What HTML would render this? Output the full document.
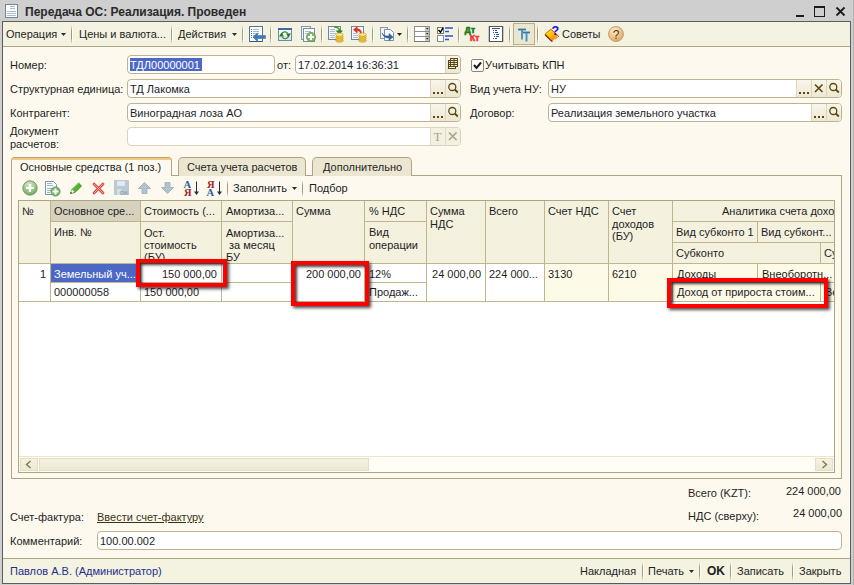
<!DOCTYPE html>
<html><head><meta charset="utf-8"><style>
html,body{margin:0;padding:0;width:854px;height:585px;overflow:hidden;background:#cfcfcf}
div{position:absolute}
svg{position:absolute;overflow:visible}
.t{white-space:pre;font-family:'Liberation Sans', sans-serif;font-size:11px;line-height:13px;color:#1e1e1e}
</style></head><body>
<div style="left:0px;top:0px;width:854px;height:585px;background:#cfcfcf"></div><svg style="position:absolute;left:5px;top:4px" width="13" height="14" viewBox="0 0 13 14"><rect x="0.5" y="0.5" width="12" height="13" fill="#fff" stroke="#6f8596"/><path d="M5 2.5h5M5 4.5h5M2 7.5h9M2 9.5h9M2 11.5h9" stroke="#a9bccb" stroke-width="1"/></svg><div class="t" style="left:25px;top:6px;font-weight:bold;font-size:12px;color:#2a2a2a">Передача ОС: Реализация. Проведен</div><div style="left:796px;top:15px;width:8px;height:2px;background:#1b1b1b"></div><div style="left:814px;top:6px;width:11px;height:11px;box-sizing:border-box;border:1px solid #1b1b1b;border-top-width:2px"></div><svg style="position:absolute;left:835px;top:6px" width="11" height="11" viewBox="0 0 11 11"><path d="M1.5 1.5L9.5 9.5M9.5 1.5L1.5 9.5" stroke="#1b1b1b" stroke-width="1.8"/></svg><div style="left:853px;top:0px;width:1px;height:585px;background:#b0b0b0"></div><div style="left:2px;top:21px;width:849px;height:563px;box-sizing:border-box;border:1px solid #5c5c5c;background:#fdf9ee"></div><div style="left:3px;top:22px;width:847px;height:24px;background:#f4f2e1"></div><div style="left:3px;top:46px;width:847px;height:1px;background:#aea682"></div><div class="t" style="left:6px;top:28px;">Операция</div><svg style="position:absolute;left:61px;top:33px" width="5" height="3" viewBox="0 0 5 3"><path d="M0 0h5L2.5 3z" fill="#2b2b2b"/></svg><div style="left:71px;top:25px;width:1px;height:19px;background:linear-gradient(#f4f2e1,#a39a77 30%,#a39a77 70%,#f4f2e1)"></div><div style="left:72px;top:25px;width:1px;height:19px;background:linear-gradient(#f4f2e1,#ffffff 30%,#ffffff 70%,#f4f2e1)"></div><div class="t" style="left:79px;top:28px;">Цены и валюта...</div><div style="left:171px;top:25px;width:1px;height:19px;background:linear-gradient(#f4f2e1,#a39a77 30%,#a39a77 70%,#f4f2e1)"></div><div style="left:172px;top:25px;width:1px;height:19px;background:linear-gradient(#f4f2e1,#ffffff 30%,#ffffff 70%,#f4f2e1)"></div><div class="t" style="left:178px;top:28px;">Действия</div><svg style="position:absolute;left:232px;top:33px" width="5" height="3" viewBox="0 0 5 3"><path d="M0 0h5L2.5 3z" fill="#2b2b2b"/></svg><div style="left:242px;top:25px;width:1px;height:19px;background:linear-gradient(#f4f2e1,#a39a77 30%,#a39a77 70%,#f4f2e1)"></div><div style="left:243px;top:25px;width:1px;height:19px;background:linear-gradient(#f4f2e1,#ffffff 30%,#ffffff 70%,#f4f2e1)"></div><svg style="position:absolute;left:249px;top:26px" width="17" height="17" viewBox="0 0 17 17"><rect x="0.5" y="0.5" width="13" height="15" fill="#fbfdff" stroke="#58748f"/><path d="M0.5 15.5h13" stroke="#3d566e"/><path d="M2 3.5h1M2 5.5h1M2 7.5h1M2 9.5h1M2 11.5h1" stroke="#3f78b0"/><path d="M4 3.5h6M4 5.5h6M4 7.5h6M4 9.5h3M4 11.5h3" stroke="#aab6c2"/><path d="M16.5 9.5H8.5V7L4 11l4.5 4.5v-3h8z" fill="#3b7db8" stroke="#2d6497" stroke-width="0.5"/></svg><div style="left:270px;top:25px;width:1px;height:19px;background:linear-gradient(#f4f2e1,#a39a77 30%,#a39a77 70%,#f4f2e1)"></div><div style="left:271px;top:25px;width:1px;height:19px;background:linear-gradient(#f4f2e1,#ffffff 30%,#ffffff 70%,#f4f2e1)"></div><svg style="position:absolute;left:278px;top:28px" width="14" height="13" viewBox="0 0 14 13"><rect x="0.5" y="0.5" width="13" height="12" fill="#f2f7fb" stroke="#6f8aa2"/><rect x="0" y="0" width="14" height="2" fill="#3f6c9a"/><rect x="1" y="8" width="12" height="4" fill="#dce8f2"/><path d="M3.5 6.5a3.5 3.5 0 0 1 6.2 -1.2" stroke="#3a8f2c" stroke-width="1.3" fill="none"/><path d="M10.5 8a3.5 3.5 0 0 1 -6.2 1.2" stroke="#3a8f2c" stroke-width="1.3" fill="none"/><path d="M1 8.5L3.5 4.5L6 8.5z" fill="#2a7a1c"/><path d="M8 5.5h5L10.5 9.5z" fill="#2a7a1c"/></svg><svg style="position:absolute;left:301px;top:26px" width="16" height="17" viewBox="0 0 16 17"><rect x="0.5" y="0.5" width="9" height="13" fill="#f1f4f8" stroke="#8797a8"/><rect x="2.5" y="2.5" width="11" height="13" fill="#fbfdff" stroke="#7c8fa2"/><path d="M4 5.5h6M4 7.5h4" stroke="#b0bdca"/><circle cx="10" cy="11" r="4.6" fill="#7cbd68" stroke="#6b8a63" stroke-width="0.8"/><path d="M10 8v6M7 11h6" stroke="#fff" stroke-width="2"/></svg><div style="left:321px;top:25px;width:1px;height:19px;background:linear-gradient(#f4f2e1,#a39a77 30%,#a39a77 70%,#f4f2e1)"></div><div style="left:322px;top:25px;width:1px;height:19px;background:linear-gradient(#f4f2e1,#ffffff 30%,#ffffff 70%,#f4f2e1)"></div><svg style="position:absolute;left:328px;top:26px" width="16" height="17" viewBox="0 0 16 17"><rect x="0.5" y="0.5" width="12" height="13" fill="#f5f8fb" stroke="#6f879e"/><path d="M2 3.5h5M2 5.5h5M2 7.5h6M2 9.5h5M2 11.5h5" stroke="#aebdcb"/><path d="M6 1c3.5 0 5.5 1 5.5 4" stroke="#3c9a2e" stroke-width="1.7" fill="none"/><path d="M7.5 4.5h7.5l-3.75 4z" fill="#2a7e1f"/><ellipse cx="11.5" cy="14.6" rx="3.8" ry="1.7" fill="#f0c640" stroke="#c99d25" stroke-width="0.7"/><ellipse cx="11.5" cy="12.6" rx="3.8" ry="1.7" fill="#f0c640" stroke="#c99d25" stroke-width="0.7"/><ellipse cx="11.5" cy="10.6" rx="3.8" ry="1.7" fill="#f0c640" stroke="#c99d25" stroke-width="0.7"/><ellipse cx="11.5" cy="8.6" rx="3.8" ry="1.7" fill="#fce992" stroke="#c99d25" stroke-width="0.7"/></svg><svg style="position:absolute;left:351px;top:26px" width="16" height="17" viewBox="0 0 16 17"><rect x="0.5" y="0.5" width="12" height="13" fill="#f5f8fb" stroke="#6f879e"/><path d="M2 7.5h4M2 9.5h5M2 11.5h5" stroke="#aebdcb"/><path d="M10 8c0-3-1.5-4.5-4.5-4.5" stroke="#e0301e" stroke-width="1.8" fill="none"/><path d="M6.5 0v7.5L2 3.75z" fill="#e0301e"/><ellipse cx="11.5" cy="14.6" rx="3.8" ry="1.7" fill="#f0c640" stroke="#c99d25" stroke-width="0.7"/><ellipse cx="11.5" cy="12.6" rx="3.8" ry="1.7" fill="#f0c640" stroke="#c99d25" stroke-width="0.7"/><ellipse cx="11.5" cy="10.6" rx="3.8" ry="1.7" fill="#f0c640" stroke="#c99d25" stroke-width="0.7"/><ellipse cx="11.5" cy="8.6" rx="3.8" ry="1.7" fill="#fce992" stroke="#c99d25" stroke-width="0.7"/></svg><div style="left:372px;top:25px;width:1px;height:19px;background:linear-gradient(#f4f2e1,#a39a77 30%,#a39a77 70%,#f4f2e1)"></div><div style="left:373px;top:25px;width:1px;height:19px;background:linear-gradient(#f4f2e1,#ffffff 30%,#ffffff 70%,#f4f2e1)"></div><svg style="position:absolute;left:380px;top:27px" width="15" height="15" viewBox="0 0 15 15"><rect x="0.5" y="0.5" width="7" height="11" fill="#eef1f4" stroke="#8e9aa6"/><path d="M4.5 2.5h6l3 3v8h-9z" fill="#f8fafc" stroke="#7e8e9e"/><path d="M2 6c2 3 4 3 7 3V6.5l4 3.5-4 3.5V11C5 11 3 9 2 6z" fill="#2d6da3" stroke="#21507a" stroke-width="0.5"/></svg><svg style="position:absolute;left:397px;top:33px" width="5" height="3" viewBox="0 0 5 3"><path d="M0 0h5L2.5 3z" fill="#2b2414"/></svg><div style="left:407px;top:25px;width:1px;height:19px;background:linear-gradient(#f4f2e1,#a39a77 30%,#a39a77 70%,#f4f2e1)"></div><div style="left:408px;top:25px;width:1px;height:19px;background:linear-gradient(#f4f2e1,#ffffff 30%,#ffffff 70%,#f4f2e1)"></div><svg style="position:absolute;left:414px;top:26px" width="16" height="16" viewBox="0 0 16 16"><rect x="0.5" y="0.5" width="15" height="5" fill="#fff" stroke="#8f8f8f"/><path d="M0 5.5h16" stroke="#7a7a7a" stroke-width="1"/><rect x="11" y="1" width="4" height="4" fill="#c4c4c4"/><path d="M12 2h2.5l-1.25 1.5z" fill="#222"/><rect x="0.5" y="5.5" width="15" height="5" fill="#fff" stroke="#8f8f8f"/><path d="M0 10.5h16" stroke="#7a7a7a" stroke-width="1"/><rect x="11" y="6" width="4" height="4" fill="#c4c4c4"/><path d="M12 7h2.5l-1.25 1.5z" fill="#222"/><rect x="0.5" y="10.5" width="15" height="5" fill="#fff" stroke="#8f8f8f"/><path d="M0 15.5h16" stroke="#7a7a7a" stroke-width="1"/><rect x="11" y="11" width="4" height="4" fill="#c4c4c4"/><path d="M12 12h2.5l-1.25 1.5z" fill="#222"/></svg><svg style="position:absolute;left:437px;top:27px" width="17" height="14" viewBox="0 0 17 14"><rect x="0.5" y="0.5" width="6" height="6" fill="#fff" stroke="#7a7a7a"/><path d="M1.5 3l2 2.2L6 1" stroke="#000" stroke-width="1.5" fill="none"/><rect x="0.5" y="8.5" width="6" height="6" fill="#fff" stroke="#8a8a8a"/><path d="M8 1h8M8 4.5h4M8 9h8M8 12.5h4" stroke="#2356d0" stroke-width="1.7"/></svg><div style="left:458px;top:25px;width:1px;height:19px;background:linear-gradient(#f4f2e1,#a39a77 30%,#a39a77 70%,#f4f2e1)"></div><div style="left:459px;top:25px;width:1px;height:19px;background:linear-gradient(#f4f2e1,#ffffff 30%,#ffffff 70%,#f4f2e1)"></div><svg style="position:absolute;left:464px;top:26px" width="18" height="17" viewBox="0 0 18 17"><text x="0.8" y="7.3" font-family="Liberation Sans" font-weight="bold" font-size="8.2" fill="#1d7d1a" stroke="#1d7d1a" stroke-width="0.7" letter-spacing="0.3">Дт</text><text x="6" y="14.8" font-family="Liberation Sans" font-weight="bold" font-size="8.2" fill="#f2393a" stroke="#f2393a" stroke-width="0.7" letter-spacing="0.3">Кт</text></svg><svg style="position:absolute;left:488px;top:26px" width="16" height="16" viewBox="0 0 16 16"><rect x="0" y="0" width="16" height="16" fill="#c8c8c8"/><rect x="1.5" y="0.5" width="13" height="15" fill="#fff" stroke="#555"/><path d="M4 2.5h8" stroke="#1f5f91" stroke-width="1"/><path d="M5 4.5h1M7 4.5h2M5 6.5h1M7 6.5h3M6 8.5h1M8 8.5h3M6 10.5h1M8 10.5h3M5 12.5h1M7 12.5h2" stroke="#1f5f91"/></svg><div style="left:509px;top:25px;width:1px;height:19px;background:linear-gradient(#f4f2e1,#a39a77 30%,#a39a77 70%,#f4f2e1)"></div><div style="left:510px;top:25px;width:1px;height:19px;background:linear-gradient(#f4f2e1,#ffffff 30%,#ffffff 70%,#f4f2e1)"></div><div style="left:513px;top:23px;width:22px;height:22px;box-sizing:border-box;border:1px solid #b9ae87;background:#ebe6d0"></div><svg style="position:absolute;left:513px;top:23px" width="22" height="22" viewBox="0 0 22 22"><path d="M5 6.5h8M9 6.5v10M10 9.5h7M13.5 9.5v9" stroke="#4a97c2" stroke-width="2" fill="none"/><path d="M5 6.5h8M10 9.5h7" stroke="#2f6f98" stroke-width="0.8"/></svg><div style="left:537px;top:25px;width:1px;height:19px;background:linear-gradient(#f4f2e1,#a39a77 30%,#a39a77 70%,#f4f2e1)"></div><div style="left:538px;top:25px;width:1px;height:19px;background:linear-gradient(#f4f2e1,#ffffff 30%,#ffffff 70%,#f4f2e1)"></div><svg style="position:absolute;left:544px;top:25px" width="17" height="18" viewBox="0 0 17 18"><defs><linearGradient id="bk" x1="0" y1="0" x2="1" y2="1"><stop offset="0.2" stop-color="#ffe800"/><stop offset="0.8" stop-color="#ff7a10"/></linearGradient></defs><path d="M1 9.3L6.8 4.2L14.7 11.2L7.9 16.6z" fill="url(#bk)" stroke="#b94a08" stroke-width="0.9"/><path d="M1.2 9.8L7.9 16.4" stroke="#6a2a05" stroke-width="1.2"/><path d="M8.8 15.6l5.2-4.3" stroke="#fff" stroke-width="1.1" stroke-dasharray="1 0.8"/><text x="7.6" y="9.8" font-family="Liberation Sans" font-weight="bold" font-size="12.5" fill="#0a10f0">?</text></svg><div class="t" style="left:562px;top:28px;">Советы</div><svg style="position:absolute;left:608px;top:26px" width="16" height="16" viewBox="0 0 16 16"><defs><radialGradient id="hg" cx="0.4" cy="0.3" r="0.75"><stop offset="0" stop-color="#fdeed3"/><stop offset="1" stop-color="#e4a050"/></radialGradient></defs><circle cx="8" cy="8" r="7.5" fill="url(#hg)" stroke="#b9946a" stroke-width="0.8"/><text x="8" y="12.5" text-anchor="middle" font-family="Liberation Sans" font-size="12" fill="#4a3a20">?</text></svg><div class="t" style="left:10px;top:59px;">Номер:</div><div style="left:127px;top:55px;width:148px;height:19px;box-sizing:border-box;border:1px solid #bdb38e;border-radius:4px;background:#fff;overflow:hidden"></div><div style="left:130px;top:58px;width:72px;height:13px;background:#4c68c6"></div><div class="t" style="left:130px;top:59px;color:#fff">ТДЛ00000001</div><div class="t" style="left:277px;top:59px;">от:</div><div style="left:295px;top:55px;width:166px;height:19px;box-sizing:border-box;border:1px solid #bdb38e;border-radius:4px;background:#fff;overflow:hidden"><div style="left:149px;top:0;width:14px;height:17px;background:linear-gradient(#f8f6ea,#ece8d2);border-left:1px solid #ddd6bd"></div></div><svg style="position:absolute;left:445px;top:55px" width="15" height="19" viewBox="0 0 15 19"><g fill="none" stroke="#5a4610" stroke-width="1"><rect x="3.5" y="5.5" width="7" height="8"/><rect x="5.5" y="3.5" width="7" height="8" fill="#f1edd9"/><path d="M5.5 5.5h7M5.5 7.5h7M5.5 9.5h7M9 3.5v8"/></g><path d="M3.5 7.5h2M3.5 9.5h2M3.5 11.5h7" stroke="#5a4610"/></svg><div class="t" style="left:298px;top:59px;">17.02.2014 16:36:31</div><div class="t" style="left:10px;top:83px;">Структурная единица:</div><div style="left:127px;top:79px;width:334px;height:19px;box-sizing:border-box;border:1px solid #bdb38e;border-radius:4px;background:#fff;overflow:hidden"><div style="left:317px;top:0;width:14px;height:17px;background:linear-gradient(#f8f6ea,#ece8d2);border-left:1px solid #ddd6bd"></div><div style="left:302px;top:0;width:14px;height:17px;background:linear-gradient(#f8f6ea,#ece8d2);border-left:1px solid #ddd6bd"></div></div><svg style="position:absolute;left:445px;top:79px" width="15" height="19" viewBox="0 0 15 19"><circle cx="7.3" cy="8" r="3.5" fill="none" stroke="#5a4610" stroke-width="1.3"/><path d="M9.8 10.5l3 3" stroke="#5a4610" stroke-width="1.8"/></svg><svg style="position:absolute;left:430px;top:79px" width="15" height="19" viewBox="0 0 15 19"><rect x="3" y="13" width="2" height="2" fill="#5a4610"/><rect x="7" y="13" width="2" height="2" fill="#5a4610"/><rect x="11" y="13" width="2" height="2" fill="#5a4610"/></svg><div class="t" style="left:130px;top:83px;">ТД Лакомка</div><div class="t" style="left:10px;top:107px;">Контрагент:</div><div style="left:127px;top:103px;width:334px;height:19px;box-sizing:border-box;border:1px solid #bdb38e;border-radius:4px;background:#fff;overflow:hidden"><div style="left:317px;top:0;width:14px;height:17px;background:linear-gradient(#f8f6ea,#ece8d2);border-left:1px solid #ddd6bd"></div><div style="left:302px;top:0;width:14px;height:17px;background:linear-gradient(#f8f6ea,#ece8d2);border-left:1px solid #ddd6bd"></div></div><svg style="position:absolute;left:445px;top:103px" width="15" height="19" viewBox="0 0 15 19"><circle cx="7.3" cy="8" r="3.5" fill="none" stroke="#5a4610" stroke-width="1.3"/><path d="M9.8 10.5l3 3" stroke="#5a4610" stroke-width="1.8"/></svg><svg style="position:absolute;left:430px;top:103px" width="15" height="19" viewBox="0 0 15 19"><rect x="3" y="13" width="2" height="2" fill="#5a4610"/><rect x="7" y="13" width="2" height="2" fill="#5a4610"/><rect x="11" y="13" width="2" height="2" fill="#5a4610"/></svg><div class="t" style="left:130px;top:107px;">Виноградная лоза АО</div><div class="t" style="left:10px;top:125px;">Документ</div><div class="t" style="left:10px;top:138px;">расчетов:</div><div style="left:127px;top:127px;width:334px;height:19px;box-sizing:border-box;border:1px solid #d9d3bf;border-radius:4px;background:#fff;overflow:hidden"><div style="left:317px;top:0;width:14px;height:17px;background:#f3f0df;border-left:1px solid #e0dac6"></div><div style="left:302px;top:0;width:14px;height:17px;background:#f3f0df;border-left:1px solid #e0dac6"></div></div><svg style="position:absolute;left:445px;top:127px" width="15" height="19" viewBox="0 0 15 19"><path d="M4 5.5l7.5 7.5M11.5 5.5l-7.5 7.5" stroke="#a8a292" stroke-width="1.6"/></svg><svg style="position:absolute;left:430px;top:127px" width="15" height="19" viewBox="0 0 15 19"><text x="7.5" y="14" text-anchor="middle" font-family="Liberation Serif" font-size="13" fill="#a8a292">T</text></svg><div style="left:471px;top:59px;width:13px;height:13px;box-sizing:border-box;border:1px solid #8f8670;border-radius:2px;background:#fff"></div><svg style="position:absolute;left:471px;top:59px" width="13" height="13" viewBox="0 0 13 13"><path d="M3 6l2.5 3L10 3.5" stroke="#1b1b1b" stroke-width="2" fill="none"/></svg><div class="t" style="left:485px;top:59px;">Учитывать КПН</div><div class="t" style="left:470px;top:83px;">Вид учета НУ:</div><div style="left:548px;top:79px;width:294px;height:19px;box-sizing:border-box;border:1px solid #bdb38e;border-radius:4px;background:#fff;overflow:hidden"><div style="left:277px;top:0;width:14px;height:17px;background:linear-gradient(#f8f6ea,#ece8d2);border-left:1px solid #ddd6bd"></div><div style="left:262px;top:0;width:14px;height:17px;background:linear-gradient(#f8f6ea,#ece8d2);border-left:1px solid #ddd6bd"></div><div style="left:247px;top:0;width:14px;height:17px;background:linear-gradient(#f8f6ea,#ece8d2);border-left:1px solid #ddd6bd"></div></div><svg style="position:absolute;left:826px;top:79px" width="15" height="19" viewBox="0 0 15 19"><circle cx="7.3" cy="8" r="3.5" fill="none" stroke="#5a4610" stroke-width="1.3"/><path d="M9.8 10.5l3 3" stroke="#5a4610" stroke-width="1.8"/></svg><svg style="position:absolute;left:811px;top:79px" width="15" height="19" viewBox="0 0 15 19"><path d="M4 5.5l7.5 7.5M11.5 5.5l-7.5 7.5" stroke="#5a4610" stroke-width="1.6"/></svg><svg style="position:absolute;left:796px;top:79px" width="15" height="19" viewBox="0 0 15 19"><rect x="3" y="13" width="2" height="2" fill="#5a4610"/><rect x="7" y="13" width="2" height="2" fill="#5a4610"/><rect x="11" y="13" width="2" height="2" fill="#5a4610"/></svg><div class="t" style="left:551px;top:83px;">НУ</div><div class="t" style="left:470px;top:107px;">Договор:</div><div style="left:548px;top:103px;width:294px;height:19px;box-sizing:border-box;border:1px solid #bdb38e;border-radius:4px;background:#fff;overflow:hidden"><div style="left:277px;top:0;width:14px;height:17px;background:linear-gradient(#f8f6ea,#ece8d2);border-left:1px solid #ddd6bd"></div><div style="left:262px;top:0;width:14px;height:17px;background:linear-gradient(#f8f6ea,#ece8d2);border-left:1px solid #ddd6bd"></div></div><svg style="position:absolute;left:826px;top:103px" width="15" height="19" viewBox="0 0 15 19"><circle cx="7.3" cy="8" r="3.5" fill="none" stroke="#5a4610" stroke-width="1.3"/><path d="M9.8 10.5l3 3" stroke="#5a4610" stroke-width="1.8"/></svg><svg style="position:absolute;left:811px;top:103px" width="15" height="19" viewBox="0 0 15 19"><rect x="3" y="13" width="2" height="2" fill="#5a4610"/><rect x="7" y="13" width="2" height="2" fill="#5a4610"/><rect x="11" y="13" width="2" height="2" fill="#5a4610"/></svg><div class="t" style="left:551px;top:107px;">Реализация земельного участка</div><div style="left:11px;top:175px;width:831px;height:304px;box-sizing:border-box;border:1px solid #aea682;background:#fdf9ee"></div><div style="left:178px;top:157px;width:128px;height:19px;box-sizing:border-box;border:1px solid #aea682;border-bottom:none;border-radius:5px 5px 0 0;background:#ebe6d1"></div><div class="t" style="left:187px;top:161px;">Счета учета расчетов</div><div style="left:312px;top:157px;width:100px;height:19px;box-sizing:border-box;border:1px solid #aea682;border-bottom:none;border-radius:5px 5px 0 0;background:#ebe6d1"></div><div class="t" style="left:323px;top:161px;">Дополнительно</div><div style="left:11px;top:157px;width:161px;height:19px;box-sizing:border-box;border:1px solid #aea682;border-bottom:none;border-radius:4px 4px 0 0;background:#fdf9ee"></div><div style="left:12px;top:158px;width:159px;height:2px;background:#f6c77c;border-radius:3px 3px 0 0"></div><div style="left:12px;top:175px;width:159px;height:1px;background:#fdf9ee"></div><div class="t" style="left:20px;top:161px;">Основные средства (1 поз.)</div><svg style="position:absolute;left:22px;top:180px" width="16" height="16" viewBox="0 0 16 16"><defs><radialGradient id="gp" cx="0.45" cy="0.3" r="0.7"><stop offset="0" stop-color="#d9efcc"/><stop offset="1" stop-color="#69ad52"/></radialGradient></defs><circle cx="8" cy="8" r="7.2" fill="url(#gp)" stroke="#7c8a76" stroke-width="0.9"/><path d="M8 4v8M4 8h8" stroke="#fff" stroke-width="2.2"/></svg><svg style="position:absolute;left:45px;top:181px" width="17" height="16" viewBox="0 0 17 16"><path d="M0.5 0.5h8l3 3v10h-11z" fill="#f7faff" stroke="#7a96b2"/><path d="M2 2.5h5M2 4.5h6M2 7.5h6M2 9.5h4M2 11.5h3" stroke="#a3b4c4"/><circle cx="10.5" cy="10.5" r="4.6" fill="#76b864" stroke="#5a8e50" stroke-width="0.8"/><path d="M10.5 7.5v6M7.5 10.5h6" stroke="#fff" stroke-width="2"/></svg><svg style="position:absolute;left:69px;top:181px" width="14" height="14" viewBox="0 0 14 14"><path d="M1.5 12.5l1.5-4 6.5-6.5 3 3-6.5 6.5z" fill="#4fb52a" stroke="#2f7d1a" stroke-width="0.8"/><path d="M4 7.5l6.5-6.5" stroke="#a5e08a" stroke-width="1"/><path d="M1.5 12.5l1.5-4 2.5 2.5z" fill="#fff"/><path d="M1.2 12.8l0.8-2 1.2 1.2z" fill="#1d4a10"/></svg><svg style="position:absolute;left:92px;top:182px" width="13" height="13" viewBox="0 0 13 13"><path d="M2 2l9 9M11 2l-9 9" stroke="#d84a40" stroke-width="2.8" stroke-linecap="round"/><path d="M2 2l9 9M11 2l-9 9" stroke="#f7a49c" stroke-width="1" stroke-linecap="round"/></svg><svg style="position:absolute;left:114px;top:180px" width="15" height="15" viewBox="0 0 15 15"><rect x="0" y="0" width="15" height="15" rx="1" fill="#b9c9d6"/><rect x="3" y="1" width="8" height="5" fill="#e5edf2" stroke="#c8d4dd" stroke-width="0.6"/><rect x="3" y="9" width="4" height="6" fill="#d5e0e8"/><text x="5.5" y="14.5" font-family="Liberation Sans" font-size="6" font-weight="bold" fill="#95a8b7">OK</text></svg><svg style="position:absolute;left:138px;top:182px" width="13" height="12" viewBox="0 0 13 12"><path d="M6.5 0.5L12.5 6.5H9v5H4v-5H0.5z" fill="#b4c3d0" stroke="#9aaab8" stroke-width="0.8"/></svg><svg style="position:absolute;left:161px;top:182px" width="13" height="12" viewBox="0 0 13 12"><path d="M6.5 11.5L12.5 5.5H9v-5H4v5H0.5z" fill="#b4c3d0" stroke="#9aaab8" stroke-width="0.8"/></svg><svg style="position:absolute;left:184px;top:180px" width="15" height="16" viewBox="0 0 15 16"><text x="-0.5" y="7.5" font-family="Liberation Serif" font-weight="bold" font-size="10.5" fill="#2c5d98">A</text><text x="0" y="15.7" font-family="Liberation Serif" font-weight="bold" font-size="10.5" fill="#a42424">Я</text><path d="M12.5 1.5v12" stroke="#1d2f45" stroke-width="1"/><path d="M10 11.5h5l-2.5 3.5z" fill="#1d2f45"/></svg><svg style="position:absolute;left:207px;top:180px" width="15" height="16" viewBox="0 0 15 16"><text x="0" y="7.5" font-family="Liberation Serif" font-weight="bold" font-size="10.5" fill="#a42424">Я</text><text x="-0.5" y="15.7" font-family="Liberation Serif" font-weight="bold" font-size="10.5" fill="#2c5d98">A</text><path d="M12.5 1.5v12" stroke="#1d2f45" stroke-width="1"/><path d="M10 11.5h5l-2.5 3.5z" fill="#1d2f45"/></svg><div style="left:227px;top:180px;width:1px;height:17px;background:linear-gradient(#fdf9ee,#a39a77 30%,#a39a77 70%,#fdf9ee)"></div><div class="t" style="left:233px;top:182px;">Заполнить</div><svg style="position:absolute;left:292px;top:187px" width="5" height="3" viewBox="0 0 5 3"><path d="M0 0h5L2.5 3z" fill="#2b2b2b"/></svg><div style="left:302px;top:180px;width:1px;height:17px;background:linear-gradient(#fdf9ee,#a39a77 30%,#a39a77 70%,#fdf9ee)"></div><div class="t" style="left:309px;top:182px;">Подбор</div><div style="left:18px;top:200px;width:817px;height:273px;box-sizing:border-box;border:1px solid #aea682;background:#fff"></div><div style="left:19px;top:201px;width:815px;height:62px;background:#f4f1df"></div><div style="left:51px;top:201px;width:89px;height:20px;background:#d6d2be"></div><div style="left:545px;top:264px;width:289px;height:37px;background:#fdfbe7"></div><div style="left:51px;top:264px;width:89px;height:18px;background:#4c68c6"></div><div style="left:50px;top:201px;width:1px;height:100px;background:#bfb690"></div><div style="left:140px;top:201px;width:1px;height:100px;background:#bfb690"></div><div style="left:221px;top:201px;width:1px;height:100px;background:#bfb690"></div><div style="left:292px;top:201px;width:1px;height:100px;background:#bfb690"></div><div style="left:364px;top:201px;width:1px;height:100px;background:#bfb690"></div><div style="left:426px;top:201px;width:1px;height:100px;background:#bfb690"></div><div style="left:485px;top:201px;width:1px;height:100px;background:#bfb690"></div><div style="left:544px;top:201px;width:1px;height:100px;background:#bfb690"></div><div style="left:608px;top:201px;width:1px;height:100px;background:#bfb690"></div><div style="left:672px;top:201px;width:1px;height:100px;background:#bfb690"></div><div style="left:757px;top:222px;width:1px;height:20px;background:#bfb690"></div><div style="left:757px;top:264px;width:1px;height:18px;background:#bfb690"></div><div style="left:820px;top:243px;width:1px;height:20px;background:#bfb690"></div><div style="left:820px;top:283px;width:1px;height:18px;background:#bfb690"></div><div style="left:51px;top:221px;width:241px;height:1px;background:#bfb690"></div><div style="left:365px;top:221px;width:61px;height:1px;background:#bfb690"></div><div style="left:673px;top:221px;width:161px;height:1px;background:#bfb690"></div><div style="left:673px;top:242px;width:161px;height:1px;background:#bfb690"></div><div style="left:19px;top:263px;width:815px;height:1px;background:#bfb690"></div><div style="left:51px;top:282px;width:241px;height:1px;background:#bfb690"></div><div style="left:365px;top:282px;width:61px;height:1px;background:#bfb690"></div><div style="left:673px;top:282px;width:161px;height:1px;background:#bfb690"></div><div style="left:19px;top:301px;width:815px;height:1px;background:#bfb690"></div><div class="t" style="left:22px;top:205px;">№</div><div class="t" style="left:54px;top:205px;">Основное сре...</div><div class="t" style="left:54px;top:226px;">Инв. №</div><div class="t" style="left:144px;top:205px;">Стоимость (...</div><div style="left:141px;top:222px;width:80px;height:41px;overflow:hidden"><div class="t" style="left:3px;top:5px;">Ост.</div></div><div style="left:141px;top:222px;width:80px;height:41px;overflow:hidden"><div class="t" style="left:3px;top:17px;">стоимость</div></div><div style="left:141px;top:222px;width:80px;height:41px;overflow:hidden"><div class="t" style="left:3px;top:29px;">(БУ)</div></div><div class="t" style="left:226px;top:205px;">Амортиза...</div><div style="left:222px;top:222px;width:70px;height:41px;overflow:hidden"><div class="t" style="left:4px;top:5px;">Амортиза...</div></div><div style="left:222px;top:222px;width:70px;height:41px;overflow:hidden"><div class="t" style="left:4px;top:17px;"> за месяц</div></div><div style="left:222px;top:222px;width:70px;height:41px;overflow:hidden"><div class="t" style="left:4px;top:29px;">БУ</div></div><div class="t" style="left:296px;top:205px;">Сумма</div><div class="t" style="left:369px;top:205px;">% НДС</div><div class="t" style="left:369px;top:226px;">Вид</div><div class="t" style="left:369px;top:239px;">операции</div><div class="t" style="left:430px;top:205px;">Сумма</div><div class="t" style="left:430px;top:218px;">НДС</div><div class="t" style="left:489px;top:205px;">Всего</div><div class="t" style="left:548px;top:205px;">Счет НДС</div><div class="t" style="left:612px;top:205px;">Счет</div><div class="t" style="left:612px;top:218px;">доходов</div><div class="t" style="left:612px;top:230px;">(БУ)</div><div style="left:673px;top:201px;width:161px;height:20px;overflow:hidden"><div class="t" style="left:49px;top:4px;">Аналитика счета доходов</div></div><div class="t" style="left:676px;top:226px;">Вид субконто 1</div><div class="t" style="left:761px;top:226px;">Вид субконт...</div><div class="t" style="left:676px;top:247px;">Субконто</div><div style="left:821px;top:243px;width:13px;height:20px;overflow:hidden"><div class="t" style="left:3px;top:4px;">Субконто</div></div><div class="t" style="left:-254px;top:268px;width:300px;text-align:right;">1</div><div class="t" style="left:54px;top:268px;color:#fff">Земельный уч...</div><div class="t" style="left:54px;top:286px;">000000058</div><div class="t" style="left:-83px;top:268px;width:300px;text-align:right;">150 000,00</div><div class="t" style="left:144px;top:286px;">150 000,00</div><div class="t" style="left:61px;top:268px;width:300px;text-align:right;">200 000,00</div><div class="t" style="left:369px;top:268px;">12%</div><div class="t" style="left:369px;top:286px;">Продаж...</div><div class="t" style="left:181px;top:268px;width:300px;text-align:right;">24 000,00</div><div class="t" style="left:489px;top:268px;">224 000...</div><div class="t" style="left:548px;top:268px;">3130</div><div class="t" style="left:612px;top:268px;">6210</div><div class="t" style="left:677px;top:268px;">Доходы</div><div class="t" style="left:762px;top:268px;">Внеоборотн...</div><div class="t" style="left:677px;top:286px;">Доход от прироста стоим...</div><div style="left:821px;top:283px;width:13px;height:18px;overflow:hidden"><div class="t" style="left:4px;top:3px;">Ве</div></div><div style="left:19px;top:456px;width:815px;height:16px;background:#fefdf6;border-top:1px solid #ece6cc;box-sizing:border-box"></div><div style="left:20px;top:458px;width:18px;height:13px;box-sizing:border-box;border:1px solid #e6dfbf;background:linear-gradient(#f5f2e2,#ece8d4)"></div><div style="left:39px;top:458px;width:330px;height:13px;box-sizing:border-box;border:1px solid #e6dfbf;background:linear-gradient(#f5f2e2,#ece8d4)"></div><div style="left:815px;top:458px;width:18px;height:13px;box-sizing:border-box;border:1px solid #e6dfbf;background:linear-gradient(#f5f2e2,#ece8d4)"></div><svg style="position:absolute;left:20px;top:458px" width="18" height="13" viewBox="0 0 18 13"><path d="M10.5 3L6.5 6.5l4 3.5" stroke="#857650" stroke-width="1.4" fill="none"/></svg><svg style="position:absolute;left:815px;top:458px" width="18" height="13" viewBox="0 0 18 13"><path d="M7.5 3l4 3.5-4 3.5" stroke="#857650" stroke-width="1.4" fill="none"/></svg><div class="t" style="left:688px;top:487px;">Всего (KZT):</div><div class="t" style="left:541px;top:485px;width:300px;text-align:right;">224 000,00</div><div class="t" style="left:688px;top:510px;">НДС (сверху):</div><div class="t" style="left:542px;top:507px;width:300px;text-align:right;">24 000,00</div><div class="t" style="left:10px;top:511px;">Счет-фактура:</div><div class="t" style="left:97px;top:511px;color:#3b3413;text-decoration:underline">Ввести счет-фактуру</div><div class="t" style="left:10px;top:535px;">Комментарий:</div><div style="left:97px;top:531px;width:745px;height:19px;box-sizing:border-box;border:1px solid #bdb38e;border-radius:4px;background:#fff;overflow:hidden"></div><div class="t" style="left:100px;top:535px;">100.00.002</div><div style="left:3px;top:558px;width:847px;height:1px;background:#aea682"></div><div style="left:3px;top:559px;width:847px;height:24px;background:#f4f2e1"></div><div class="t" style="left:10px;top:565px;color:#1f2f8f">Павлов А.В. (Администратор)</div><div class="t" style="left:580px;top:565px;">Накладная</div><div style="left:642px;top:562px;width:1px;height:19px;background:linear-gradient(#f4f2e1,#a39a77 30%,#a39a77 70%,#f4f2e1)"></div><div style="left:643px;top:562px;width:1px;height:19px;background:linear-gradient(#f4f2e1,#ffffff 30%,#ffffff 70%,#f4f2e1)"></div><div class="t" style="left:648px;top:565px;">Печать</div><svg style="position:absolute;left:689px;top:570px" width="5" height="3" viewBox="0 0 5 3"><path d="M0 0h5L2.5 3z" fill="#2b2b2b"/></svg><div style="left:699px;top:562px;width:1px;height:19px;background:linear-gradient(#f4f2e1,#a39a77 30%,#a39a77 70%,#f4f2e1)"></div><div style="left:700px;top:562px;width:1px;height:19px;background:linear-gradient(#f4f2e1,#ffffff 30%,#ffffff 70%,#f4f2e1)"></div><div class="t" style="left:707px;top:565px;font-weight:bold;font-size:12px">OK</div><div style="left:730px;top:562px;width:1px;height:19px;background:linear-gradient(#f4f2e1,#a39a77 30%,#a39a77 70%,#f4f2e1)"></div><div style="left:731px;top:562px;width:1px;height:19px;background:linear-gradient(#f4f2e1,#ffffff 30%,#ffffff 70%,#f4f2e1)"></div><div class="t" style="left:737px;top:565px;">Записать</div><div style="left:792px;top:562px;width:1px;height:19px;background:linear-gradient(#f4f2e1,#a39a77 30%,#a39a77 70%,#f4f2e1)"></div><div style="left:793px;top:562px;width:1px;height:19px;background:linear-gradient(#f4f2e1,#ffffff 30%,#ffffff 70%,#f4f2e1)"></div><div class="t" style="left:799px;top:565px;">Закрыть</div><div style="left:136px;top:259px;width:91px;height:28px;box-sizing:border-box;border:4px solid #f00;box-shadow:2px 2px 3px rgba(0,0,0,0.7), inset 2px 2px 3px rgba(0,0,0,0.75)"></div><div style="left:291px;top:261px;width:78px;height:45px;box-sizing:border-box;border:4px solid #f00;box-shadow:2px 2px 3px rgba(0,0,0,0.7), inset 2px 2px 3px rgba(0,0,0,0.75)"></div><div style="left:667px;top:278px;width:161px;height:30px;box-sizing:border-box;border:4px solid #f00;box-shadow:2px 2px 3px rgba(0,0,0,0.7), inset 2px 2px 3px rgba(0,0,0,0.75)"></div>
</body></html>
